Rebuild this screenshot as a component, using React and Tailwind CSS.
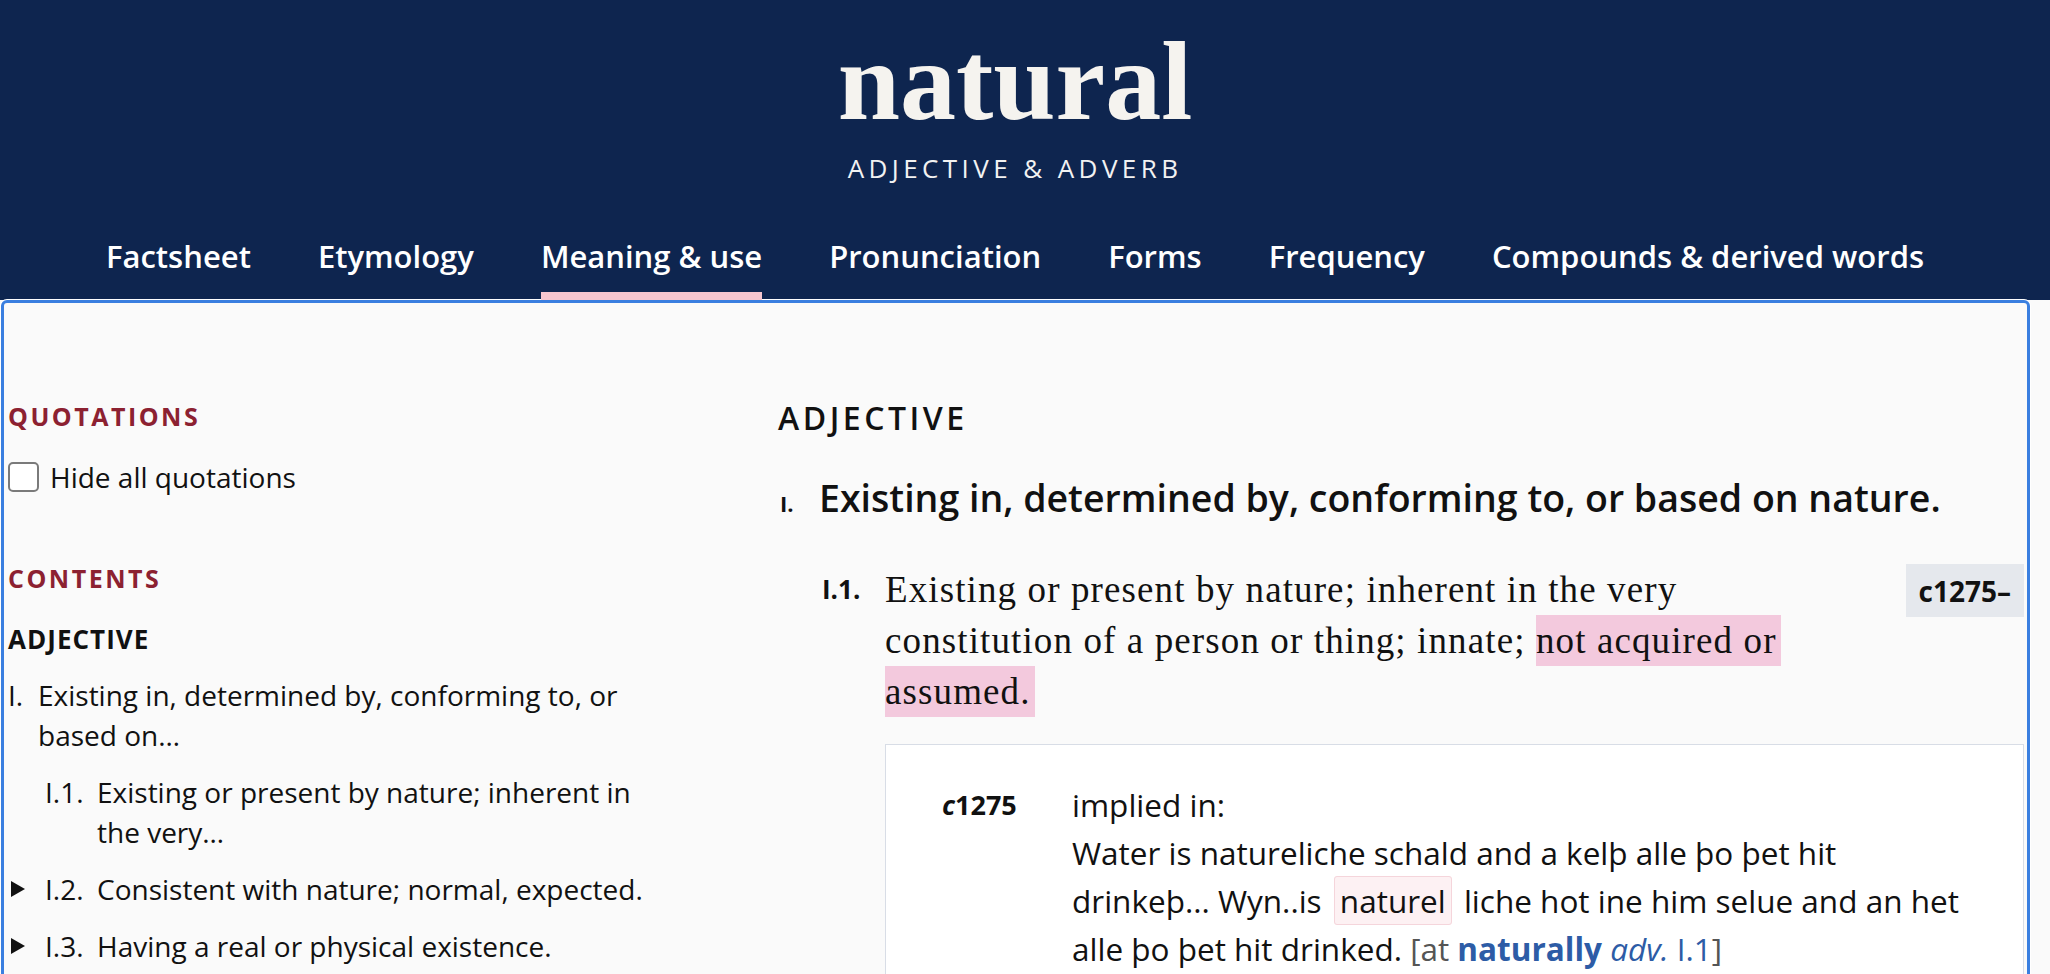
import React from 'react';

const navItems = [
  'Factsheet',
  'Etymology',
  'Meaning & use',
  'Pronunciation',
  'Forms',
  'Frequency',
  'Compounds & derived words',
];

const contents = [
  { num: 'I.', text: 'Existing in, determined by, conforming to, or based on…', level: 0 },
  { num: 'I.1.', text: 'Existing or present by nature; inherent in the very…', level: 1 },
  { num: 'I.2.', text: 'Consistent with nature; normal, expected.', level: 1, toggle: true },
  { num: 'I.3.', text: 'Having a real or physical existence.', level: 1, toggle: true },
];

const Triangle = () => (
  <svg width="16" height="18" viewBox="0 0 16 18">
    <path d="M1 1 L15 9 L1 17 Z" fill="#111" />
  </svg>
);

const Header = () => (
  <header className="bg-[#0e254f] pr-[20px] flex flex-col items-center">
    <h1 className="pt-[25px] font-['Liberation_Serif',serif] font-bold text-[112px] leading-none text-[#f5f3ef]">
      natural
    </h1>
    <p className="mt-[18px] text-[26px] leading-[26px] tracking-[0.17em] text-[#f2f2f2]">
      ADJECTIVE &amp; ADVERB
    </p>
    <nav className="mt-[60px] flex gap-[67px]">
      {navItems.map((item) => (
        <a
          key={item}
          className={
            item === 'Meaning & use'
              ? 'text-[31px] leading-[31px] font-semibold text-white pb-[20px] border-b-[8px] border-[#f6c6cf]'
              : 'text-[31px] leading-[31px] font-semibold text-white pb-[20px] border-b-[8px] border-transparent'
          }
        >
          {item}
        </a>
      ))}
    </nav>
  </header>
);

const Sidebar = () => (
  <aside className="w-[652px] shrink-0 pt-[2px]">
    <h3 className="text-[25px] leading-[32px] font-bold tracking-[0.1em] text-[#8c2131]">QUOTATIONS</h3>
    <label className="mt-[25px] flex items-center gap-[11px] h-[40px]">
      <input
        type="checkbox"
        className="appearance-none w-[31px] h-[30px] border-[2px] border-[#7a7a7a] rounded-[5px] bg-white"
      />
      <span className="text-[28px] leading-[40px] text-[#111]">Hide all quotations</span>
    </label>

    <h3 className="mt-[65px] text-[25px] leading-[32px] font-bold tracking-[0.1em] text-[#8c2131]">CONTENTS</h3>
    <h4 className="mt-[29px] text-[26px] leading-[32px] font-bold tracking-[0.04em] text-[#111]">ADJECTIVE</h4>

    <ul className="mt-[20px] flex flex-col gap-[17px] text-[28px] leading-[40px] text-[#111]">
      {contents.map((c) =>
        c.level === 0 ? (
          <li key={c.num} className="flex">
            <span className="w-[30px] shrink-0">{c.num}</span>
            <span>{c.text}</span>
          </li>
        ) : (
          <li key={c.num} className="flex">
            <span className="w-[37px] shrink-0 h-[40px] flex items-center pl-[2px]">
              {c.toggle && <Triangle />}
            </span>
            <span className="w-[52px] shrink-0">{c.num}</span>
            <span>{c.text}</span>
          </li>
        )
      )}
    </ul>
  </aside>
);

const Entry = () => (
  <section className="flex-1 ml-[118px] text-[#111]">
    <h2 className="text-[32px] leading-[40px] font-semibold tracking-[0.11em]">ADJECTIVE</h2>

    <div className="mt-[36px] flex items-baseline">
      <span className="w-[41px] shrink-0 pl-[2px] text-[22px] font-bold">I.</span>
      <span className="text-[37.5px] leading-[48px] font-semibold">
        Existing in, determined by, conforming to, or based on nature.
      </span>
    </div>

    <div className="mt-[42px] ml-[44px] flex">
      <span className="w-[63px] shrink-0 text-[26px] leading-[51px] font-bold">I.1.</span>
      <div className="flex-1">
        <div className="flex items-start justify-between">
          <p className="max-w-[925px] font-['Liberation_Serif',serif] text-[37px] leading-[51px] tracking-[0.03em]">
            Existing or present by nature; inherent in the very constitution of a person or thing; innate;{' '}
            <span className="bg-[#f3c9dd] py-[5px] pr-[4px] box-decoration-clone">not acquired or assumed.</span>
          </p>
          <span className="shrink-0 h-[53px] px-[13px] flex items-center bg-[#e5e8ed] text-[28px] font-bold">
            c1275–
          </span>
        </div>

        <div className="mt-[27px] border border-[#d8dde6] bg-white pt-[36px] pl-[56px] pr-[20px] pb-[40px] flex">
          <span className="w-[130px] shrink-0 text-[27px] leading-[48px] font-bold">
            <span className="italic">c</span>1275
          </span>
          <div className="max-w-[892px] text-[31.5px] leading-[48px]">
            <p>implied in:</p>
            <p>
              Water is natureliche schald and a kelþ alle þo þet hit drinkeþ... Wyn..is{' '}
              <span className="bg-[#fdf1f3] border border-[#f5d5db] rounded-[3px] px-[5px] py-[2px] mx-[4px]">
                naturel
              </span>{' '}
              liche hot ine him selue and an het alle þo þet hit drinked.{' '}
              <span className="text-[#555]">[at </span>
              <span className="font-bold text-[#2d5ca6]">naturally</span>{' '}
              <span className="italic text-[#2d5ca6]">adv.</span>{' '}
              <span className="text-[#2d5ca6]">I.1</span>
              <span className="text-[#555]">]</span>
            </p>
          </div>
        </div>
      </div>
    </div>
  </section>
);

export default function App() {
  return (
    <div className="min-h-screen bg-[#fafafa] font-['Open_Sans','Noto_Sans',sans-serif]">
      <Header />
      <main className="ml-[1px] w-[2029px] border-[3px] border-[#3a7fe0] rounded-[6px] shadow-[0_0_0_1px_#ffffff] bg-[#fafafa]">
        <div className="flex pt-[95px] pl-[4px] pr-[3px] pb-[60px]">
          <Sidebar />
          <Entry />
        </div>
      </main>
    </div>
  );
}
